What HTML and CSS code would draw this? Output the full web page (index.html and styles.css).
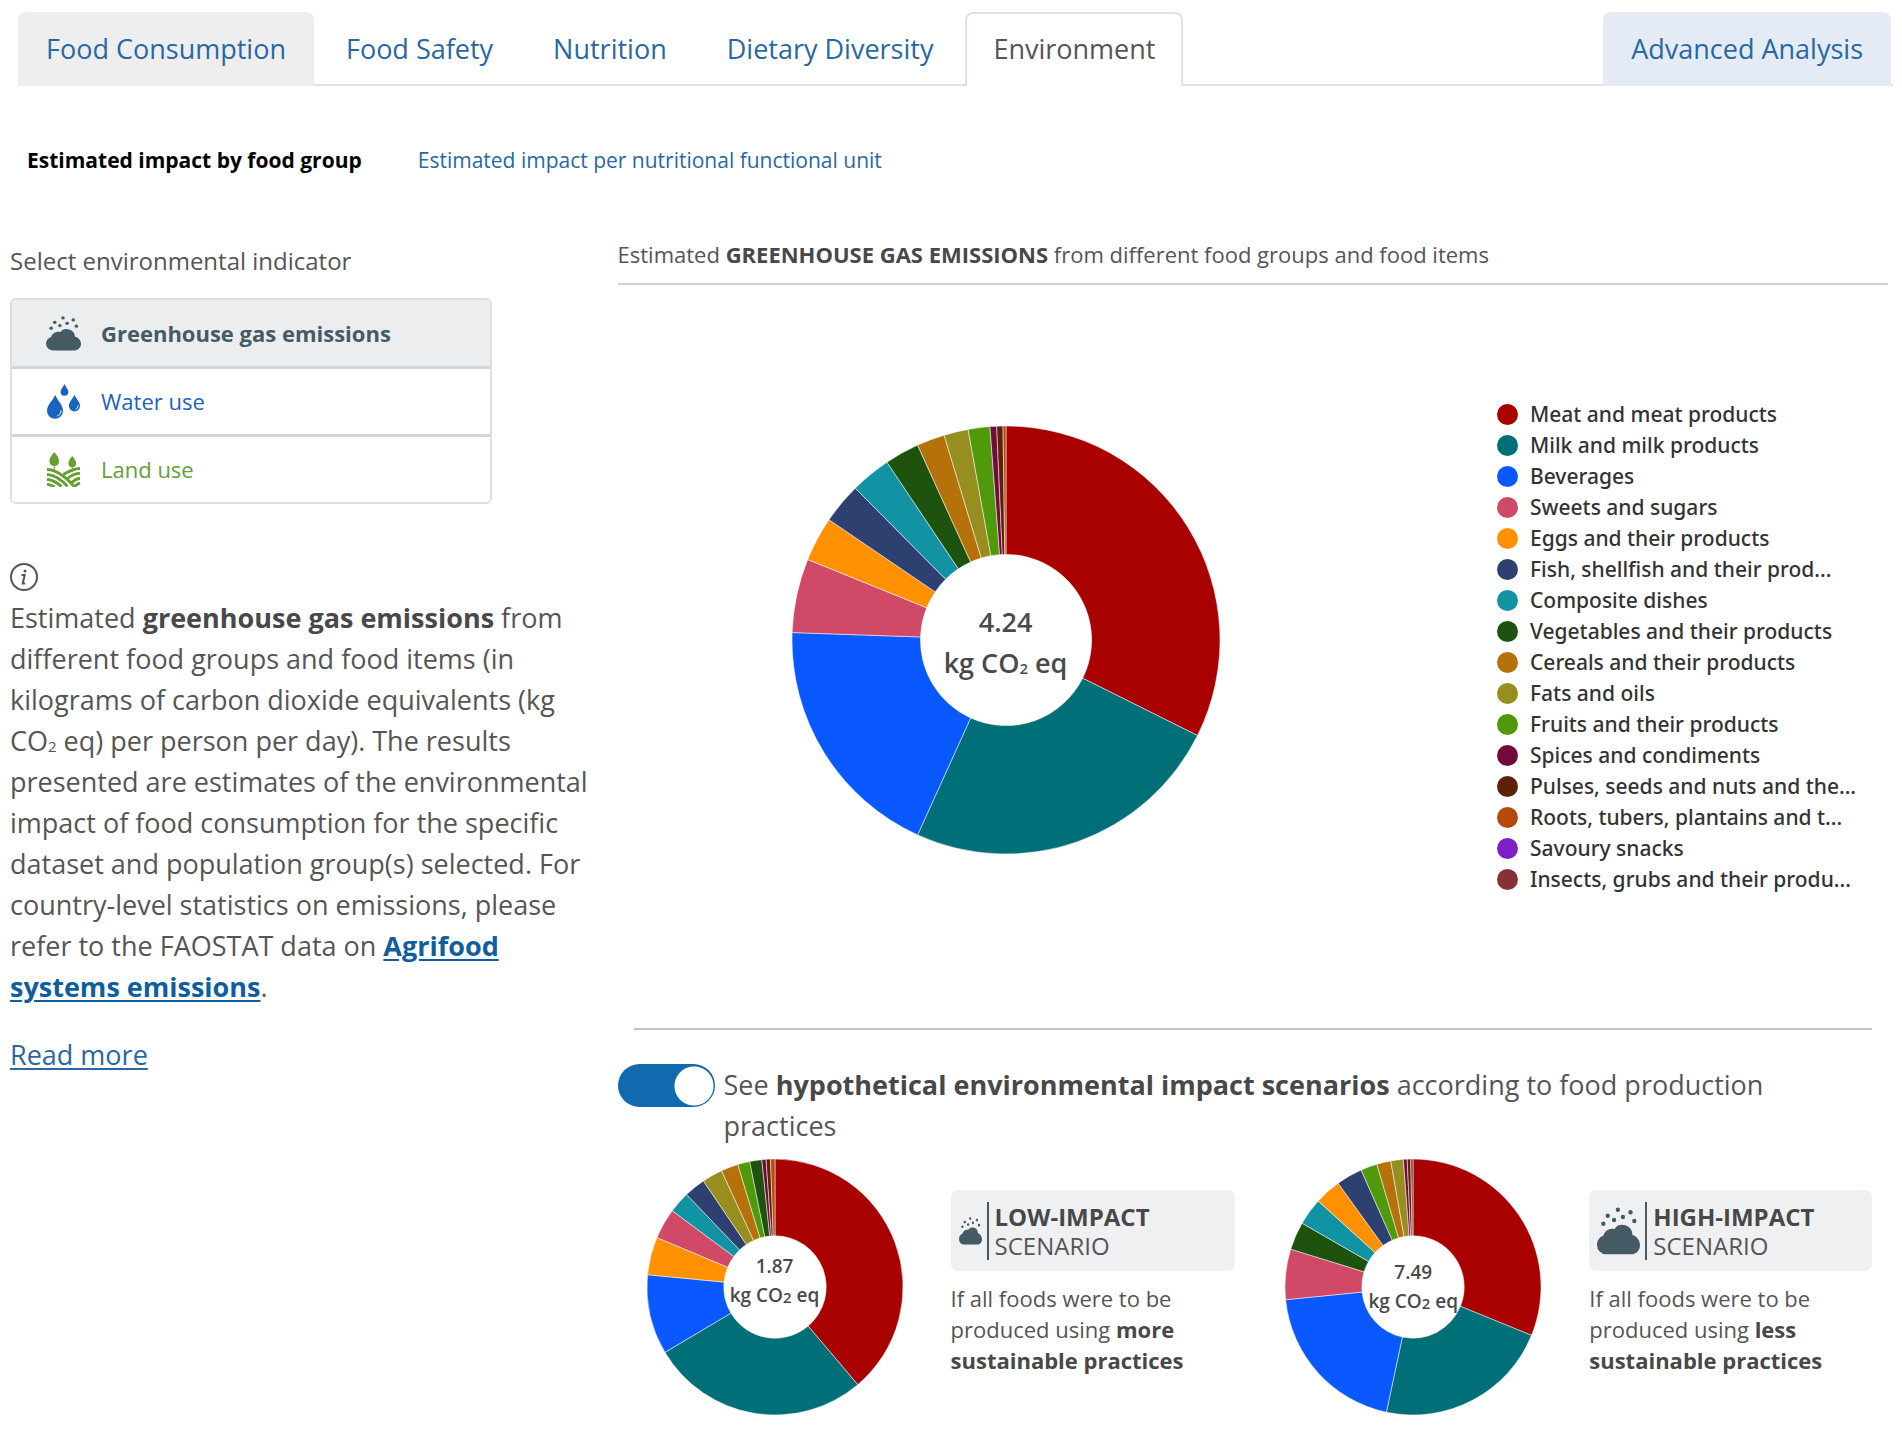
FILE: index.html
```html
<!DOCTYPE html>
<html lang="en">
<head>
<meta charset="utf-8">
<meta name="viewport" content="width=device-width, initial-scale=1">
<title>Environment – estimated impact by food group</title>
<link rel="stylesheet" href="styles.css">
</head>
<body>
<svg class="sprite" aria-hidden="true">
  <symbol id="cloud" viewBox="0 0 34 36" preserveAspectRatio="none">
    <path d="M7 35.500a7 7 0 0 1-7-7c0-3.500 2-6 5-7 1-3.500 4.500-6 9-5 1.500-2.500 4-3.500 7-3 4 .5 7 3 7 7.500 3.500 1 6 4 6 7.500 0 4-3 7-7 7z"/>
    <circle cx="16.500" cy="2" r="1.700"/><circle cx="26.500" cy="4" r="1.700"/><circle cx="8.500" cy="6.500" r="1.700"/>
    <circle cx="20.500" cy="7.500" r="1.700"/><circle cx="13.500" cy="9.800" r="1.700"/><circle cx="5" cy="12.500" r="1.700"/><circle cx="29.500" cy="10.500" r="1.700"/>
  </symbol>
</svg>

<header class="tabs">
  <nav class="tabs__list" aria-label="Sections">
    <a class="tab tab--shaded" href="#consumption">Food Consumption</a>
    <a class="tab" href="#safety">Food Safety</a>
    <a class="tab" href="#nutrition">Nutrition</a>
    <a class="tab" href="#diversity">Dietary Diversity</a>
    <a class="tab tab--active" href="#environment" aria-current="page">Environment</a>
  </nav>
  <a class="tab tab--advanced" href="#advanced">Advanced Analysis</a>
</header>

<nav class="subtabs" aria-label="Environment views">
  <a class="subtab subtab--active" href="#food-group" aria-current="page">Estimated impact by food group</a>
  <a class="subtab" href="#functional-unit">Estimated impact per nutritional functional unit</a>
</nav>

<main class="layout">
  <aside class="side">
    <h2 class="side__label">Select environmental indicator</h2>
    <div class="indicators">
      <button type="button" class="indicator indicator--gas" aria-pressed="true">
        <svg class="indicator__icon"><use href="#cloud"/></svg>Greenhouse gas emissions
      </button>
      <button type="button" class="indicator indicator--water" aria-pressed="false">
        <svg class="indicator__icon" viewBox="0 0 34 36">
          <path d="M8.500 11c2 5.500 8 10.500 8 16.500a8.200 8.200 0 0 1-16.500 0C0 21.500 6.500 16.500 8.500 11z"/>
          <path d="M18 0c1 3 4 5 4 8a4 4 0 0 1-8 0c0-3 3-5 4-8z"/>
          <path d="M28.300 11c1.500 4 5.700 7 5.700 11.500a5.700 5.700 0 0 1-11.400 0c0-4.500 4.200-7.500 5.700-11.500z"/>
          <path class="indicator__shine" d="M14.500 27c0 3-1.500 5-4 6M32 22c0 2-1 3.500-2.500 4"/>
        </svg>Water use
      </button>
      <button type="button" class="indicator indicator--land" aria-pressed="false">
        <svg class="indicator__icon" viewBox="0 0 34 36">
          <path d="M7.500 0c2 2.500 5 6 5 9.500 0 3-2 5-5 5s-5-2-5-5C2.500 6 5.500 2.500 7.500 0zM26 4c1.500 2 4 4.500 4 7.500 0 2.500-1.500 4.300-4 4.300s-4-1.800-4-4.300c0-3 2.500-5.500 4-7.500z"/>
          <path class="indicator__line" d="M7.500 10v9M26 13v8"/>
          <path class="indicator__furrow" d="M0 18c8 0 17 5 28 17.500M0 23c8 1 14 4 21 12.500M0 28c6 1 10 3 15 7.500M0 33c3 .5 5 1.500 8 3M34 17c-6 0-12 3-17 6M34 22c-5 0-9 2-12.500 5M34 27c-4 .5-6 2-8.500 4.500M34 32c-2 .5-4 1.500-6 4"/>
        </svg>Land use
      </button>
    </div>

    <svg class="info" viewBox="0 0 28 28" role="img" aria-label="Information">
      <circle cx="14" cy="14" r="13"/>
      <path d="M11.500 12h3.200l-2 8.500h2.500"/>
      <circle class="info__dot" cx="15" cy="8" r="1.500"/>
    </svg>
    <p class="side__text">Estimated <strong>greenhouse gas emissions</strong> from different food groups and food items (in kilograms of carbon dioxide equivalents (kg CO<sub>2</sub> eq) per person per day). The results presented are estimates of the environmental impact of food consumption for the specific dataset and population group(s) selected. For country-level statistics on emissions, please refer to the FAOSTAT data on <a class="link link--strong" href="#faostat">Agrifood systems emissions</a>.</p>
    <p class="side__text"><a class="link" href="#more">Read more</a></p>
  </aside>

  <section class="content">
    <h1 class="content__title">Estimated <strong>GREENHOUSE GAS EMISSIONS</strong> from different food groups and food items</h1>

    <div class="overview">
      <figure class="donut">
        <svg class="donut__chart" viewBox="-100 -100 200 200" data-chart="current"></svg>
        <figcaption class="donut__label">4.24<br>kg CO<sub>2</sub> eq</figcaption>
      </figure>
      <ul class="legend" id="legend"></ul>
    </div>

    <div class="scenarios">
      <div class="switch">
        <input class="switch__input" type="checkbox" role="switch" id="scenario-switch" checked>
        <label class="switch__label" for="scenario-switch">See <strong>hypothetical environmental impact scenarios</strong> according to food production practices</label>
      </div>

      <div class="scenarios__grid">
        <article class="scenario scenario--low">
          <figure class="donut donut--small">
            <svg class="donut__chart" viewBox="-100 -100 200 200" data-chart="low"></svg>
            <figcaption class="donut__label">1.87<br>kg CO<sub>2</sub> eq</figcaption>
          </figure>
          <div class="scenario__body">
            <h3 class="badge"><svg class="badge__icon"><use href="#cloud"/></svg><span class="badge__text"><strong>LOW-IMPACT</strong><br>SCENARIO</span></h3>
            <p class="scenario__text">If all foods were to be produced using <strong>more sustainable practices</strong></p>
          </div>
        </article>
        <article class="scenario scenario--high">
          <figure class="donut donut--small">
            <svg class="donut__chart" viewBox="-100 -100 200 200" data-chart="high"></svg>
            <figcaption class="donut__label">7.49<br>kg CO<sub>2</sub> eq</figcaption>
          </figure>
          <div class="scenario__body">
            <h3 class="badge"><svg class="badge__icon"><use href="#cloud"/></svg><span class="badge__text"><strong>HIGH-IMPACT</strong><br>SCENARIO</span></h3>
            <p class="scenario__text">If all foods were to be produced using <strong>less sustainable practices</strong></p>
          </div>
        </article>
      </div>
    </div>
  </section>
</main>
<script src="charts.js"></script>
</body>
</html>
```

FILE: styles.css
```css
* { box-sizing: border-box; }

body {
  margin: 0;
  padding: 12px 9px 0 10px;
  background: #fff;
  color: #555;
  font: 27px/41px "Open Sans", "Noto Sans", sans-serif;
}

h1, h2, h3, p, ul, figure { margin: 0; padding: 0; font-weight: 400; }
strong { color: #484848; font-weight: 700; }
sub { font-size: 15px; line-height: 0; vertical-align: -1px; }
.sprite { position: absolute; width: 0; height: 0; }

/* Section tabs */
.tabs {
  display: flex;
  justify-content: space-between;
  margin-left: 8px;
  box-shadow: inset 0 -2px #dfe1e2;
}
.tabs__list { display: flex; gap: 4px; }
.tab {
  height: 74px;
  padding: 15px 27px 0;
  border: 1px solid transparent;
  border-radius: 8px 8px 0 0;
  color: #2868a3;
  text-decoration: none;
}
.tab--shaded { background: #eee; }
.tab--active {
  padding: 14px 26px 0;
  border: 2px solid #dee2e6;
  border-bottom: 0;
  background: #fff;
  color: #555;
}
.tab--advanced { margin-right: 2px; background: #e4ebf4; }

.subtabs { display: flex; gap: 56px; padding: 54px 17px 0; }
.subtab { color: #2868a3; font-size: 21px; text-decoration: none; }
.subtab--active { color: #000; font-weight: 700; }

.layout {
  display: grid;
  grid-template-columns: 32% 1fr;
  column-gap: 5px;
  padding-top: 53px;
}

/* Indicator picker */
.side { padding-top: 6px; }
.side__label { font-size: 24px; }
.indicators {
  width: 80%;
  margin: 17px 0 59px;
  border: 2px solid #dcdfe1;
  border-radius: 6px;
  overflow: hidden;
}
.indicator {
  display: flex;
  align-items: center;
  gap: 20px;
  width: 100%;
  height: 66px;
  padding: 0 34px;
  border: 0;
  background: #fff;
  font: inherit;
  font-size: 22px;
}
.indicator + .indicator { height: 68px; border-top: 3px solid #d3d6d8; }
.indicator__icon { width: 35px; height: 35px; fill: currentColor; }
.indicator--gas { background: #ecedef; color: #455a64; font-weight: 700; }
.indicator--water { color: #1a63bf; }
.indicator--land { color: #66a033; }
.indicator__shine { fill: none; stroke: #fff; stroke-width: 1; }
.indicator__line { fill: none; stroke: currentColor; stroke-width: 1; }
.indicator__furrow { fill: none; stroke: currentColor; stroke-width: 3; }

.info { display: block; width: 28px; height: 28px; margin-bottom: 6px; fill: none; stroke: #555; stroke-width: 2; }
.info__dot { fill: #555; stroke: none; }
.side__text { padding-right: 12px; }
.side__text + .side__text { margin-top: 27px; }
.link { color: #2868a3; text-underline-offset: 3px; }
.link--strong { color: #0f5f9e; font-weight: 700; }

/* Overview chart */
.content { padding-right: 5px; }
.content__title {
  padding-bottom: 8px;
  border-bottom: 2px solid #d0d0d0;
  font-size: 22px;
}
.overview {
  display: flex;
  align-items: center;
  justify-content: space-between;
  margin: 0 16px;
  height: 745px;
  padding: 0 14px 34px 158px;
  border-bottom: 2px solid #c4c4c4;
}
.donut { display: grid; place-items: center; width: 428px; height: 428px; }
.donut > * { grid-area: 1 / 1; }
.donut__chart { width: 100%; height: 100%; }
.donut__slice { stroke: #fff; stroke-opacity: .5; stroke-width: 1; vector-effect: non-scaling-stroke; }
.donut__label { padding-top: 4px; color: #4a4a4a; font-weight: 600; text-align: center; }

.legend { width: 361px; margin-top: 15px; list-style: none; font: 500 21px/31px "Noto Sans", "Open Sans", sans-serif; color: #333; }
.legend__item { display: flex; align-items: center; gap: 12px; white-space: nowrap; }
.legend__dot { flex: none; width: 21px; height: 21px; border-radius: 50%; }

/* Scenarios */
.switch { display: flex; gap: 9px; padding: 34px 40px 0 0; }
.switch__input {
  appearance: none;
  flex: none;
  width: 97px;
  height: 43px;
  margin: 0;
  border-radius: 22px;
  background: radial-gradient(circle at 76px 22px, #fff 19px, transparent 20px) #116aad;
}
.scenarios__grid { display: grid; grid-template-columns: 1fr 1fr; padding-left: 29px; }
.scenario { display: grid; grid-template-columns: 256px 1fr; column-gap: 48px; }
.scenario--low { padding-right: 16px; }
.scenario--high { padding-left: 18px; }
.donut--small { width: 256px; height: 256px; margin-top: 13px; }
.donut--small .donut__label { padding: 0; font-size: 19px; line-height: 29px; }
.scenario--low .donut__label { padding-bottom: 12px; }
.scenario__body { padding: 44px 16px 0 0; }
.badge {
  display: flex;
  align-items: center;
  height: 81px;
  padding-left: 8px;
  border-radius: 7px;
  background: #eff0f2;
  font-size: 24px;
  line-height: 29px;
}
.badge__icon { width: 43px; height: 48px; fill: #455a64; }
.scenario--low .badge__icon { width: 23px; height: 28px; }
.badge__text { margin-left: 5px; padding-left: 6px; border-left: 2px solid #455a64; }
.scenario__text { padding-top: 12px; font-size: 22px; line-height: 31px; }
```

FILE: charts.js
```js
const groups = {
  meat: ["Meat and meat products", "#a90000"],
  milk: ["Milk and milk products", "#006f78"],
  beverages: ["Beverages", "#0a58ff"],
  sweets: ["Sweets and sugars", "#d04a68"],
  eggs: ["Eggs and their products", "#ff9100"],
  fish: ["Fish, shellfish and their prod...", "#2d406f"],
  composite: ["Composite dishes", "#1293a3"],
  vegetables: ["Vegetables and their products", "#1e530f"],
  cereals: ["Cereals and their products", "#b5720a"],
  fats: ["Fats and oils", "#978e20"],
  fruits: ["Fruits and their products", "#50990a"],
  spices: ["Spices and condiments", "#720a3c"],
  pulses: ["Pulses, seeds and nuts and the...", "#5e2105"],
  roots: ["Roots, tubers, plantains and t...", "#b5490c"],
  snacks: ["Savoury snacks", "#7d20ca"],
  insects: ["Insects, grubs and their produ...", "#873135"]
};

// Each slice: food group and the angle, in degrees clockwise from the top, at which it ends.
const charts = {
  current: [["meat", 116.5], ["milk", 204.4], ["beverages", 272], ["sweets", 292.1], ["eggs", 304.2], ["fish", 315.2], ["composite", 326.2], ["vegetables", 335.6], ["cereals", 343.2], ["fats", 349.8], ["fruits", 355.7], ["spices", 357.5], ["pulses", 359.2], ["roots", 360]],
  low: [["meat", 139.7], ["milk", 239.3], ["beverages", 275.5], ["eggs", 292.7], ["sweets", 306.6], ["composite", 316.3], ["fish", 326], ["fats", 335.3], ["cereals", 343.1], ["fruits", 348.6], ["vegetables", 354.1], ["spices", 356], ["pulses", 358], ["roots", 360]],
  high: [["meat", 112.2], ["milk", 192], ["beverages", 264.3], ["sweets", 287.2], ["vegetables", 299.9], ["composite", 312.2], ["eggs", 324.2], ["fish", 336.1], ["fruits", 343.6], ["cereals", 350], ["fats", 355.7], ["spices", 357.4], ["pulses", 359], ["insects", 360]]
};

const OUTER = 100, INNER = 40;
const point = (angle, radius) => {
  const a = angle * Math.PI / 180;
  return `${(Math.sin(a) * radius).toFixed(2)} ${(-Math.cos(a) * radius).toFixed(2)}`;
};

document.querySelectorAll("[data-chart]").forEach(svg => {
  let start = 0;
  for (const [group, end] of charts[svg.dataset.chart]) {
    const large = end - start > 180 ? 1 : 0;
    const path = document.createElementNS("http://www.w3.org/2000/svg", "path");
    path.setAttribute("class", "donut__slice");
    path.setAttribute("fill", groups[group][1]);
    path.setAttribute("d", `M${point(start, OUTER)}A${OUTER} ${OUTER} 0 ${large} 1 ${point(end, OUTER)}L${point(end, INNER)}A${INNER} ${INNER} 0 ${large} 0 ${point(start, INNER)}Z`);
    svg.append(path);
    start = end;
  }
});

const legend = document.getElementById("legend");
for (const [name, color] of Object.values(groups)) {
  const item = document.createElement("li");
  item.className = "legend__item";
  const dot = document.createElement("span");
  dot.className = "legend__dot";
  dot.style.background = color;
  item.append(dot, name);
  legend.append(item);
}
```
